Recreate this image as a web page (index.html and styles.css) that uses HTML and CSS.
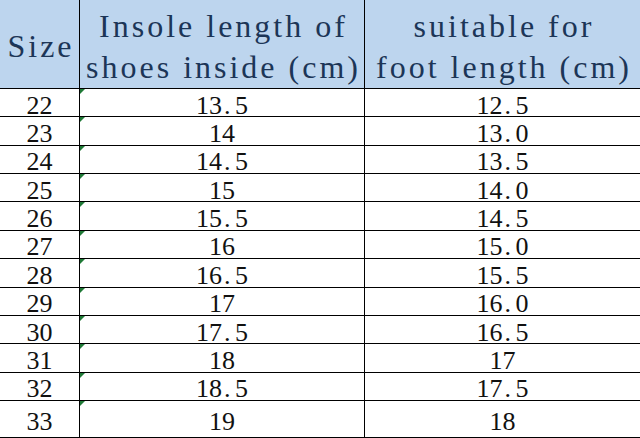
FILE: index.html
```html
<!DOCTYPE html>
<html lang="en">
<head>
<meta charset="utf-8">
<title>Size chart</title>
<link rel="stylesheet" href="styles.css">
</head>
<body>
<div class="chart">
  <div class="cell head">Size</div>
  <div class="cell head">Insole length of<br>shoes inside (cm)</div>
  <div class="cell head">suitable for<br>foot length (cm)</div>

  <div class="cell">22</div><div class="cell flag">13<span class="dot">.</span>5</div><div class="cell">12<span class="dot">.</span>5</div>
  <div class="cell">23</div><div class="cell flag">14</div><div class="cell">13<span class="dot">.</span>0</div>
  <div class="cell">24</div><div class="cell flag">14<span class="dot">.</span>5</div><div class="cell">13<span class="dot">.</span>5</div>
  <div class="cell">25</div><div class="cell flag">15</div><div class="cell">14<span class="dot">.</span>0</div>
  <div class="cell">26</div><div class="cell flag">15<span class="dot">.</span>5</div><div class="cell">14<span class="dot">.</span>5</div>
  <div class="cell">27</div><div class="cell flag">16</div><div class="cell">15<span class="dot">.</span>0</div>
  <div class="cell">28</div><div class="cell flag">16<span class="dot">.</span>5</div><div class="cell">15<span class="dot">.</span>5</div>
  <div class="cell">29</div><div class="cell flag">17</div><div class="cell">16<span class="dot">.</span>0</div>
  <div class="cell">30</div><div class="cell flag">17<span class="dot">.</span>5</div><div class="cell">16<span class="dot">.</span>5</div>
  <div class="cell">31</div><div class="cell flag">18</div><div class="cell">17</div>
  <div class="cell">32</div><div class="cell flag">18<span class="dot">.</span>5</div><div class="cell">17<span class="dot">.</span>5</div>
  <div class="cell">33</div><div class="cell flag">19</div><div class="cell">18</div>
</div>
</body>
</html>
```
FILE: styles.css
```css
html, body {
  margin: 0;
  padding: 0;
  background: #fff;
}

.chart {
  display: grid;
  grid-template-columns: 79px 284px minmax(0, 1fr);
  grid-template-rows: 88px repeat(11, minmax(0, 1fr)) 36px;
  gap: 1px;
  width: 640px;
  height: 437px;
  background: #000;
  border-bottom: 1px solid #000;
  font-family: "Liberation Serif", Tinos, "Times New Roman", Times, "DejaVu Serif", "Noto Serif", FreeSerif, serif;
  color: #111;
}

.cell {
  position: relative;
  display: flex;
  align-items: center;
  justify-content: center;
  min-height: 0;
  background: #fff;
  font-size: 26px;
  line-height: 20px;
  padding-top: 6px;
  box-sizing: border-box;
  white-space: nowrap;
  overflow: visible;
}

.head {
  background: #bdd5ee;
  color: #1c3557;
  font-size: 32px;
  line-height: 41px;
  letter-spacing: 3px;
  padding-top: 5px;
  padding-left: 3px;
  text-align: center;
}

.dot {
  display: inline-block;
  width: 13px;
  text-align: left;
  padding-left: 2px;
  box-sizing: border-box;
}

.flag::before {
  content: "";
  position: absolute;
  top: 0;
  left: 0;
  border-top: 5px solid #1f7a36;
  border-right: 5px solid transparent;
}
```
